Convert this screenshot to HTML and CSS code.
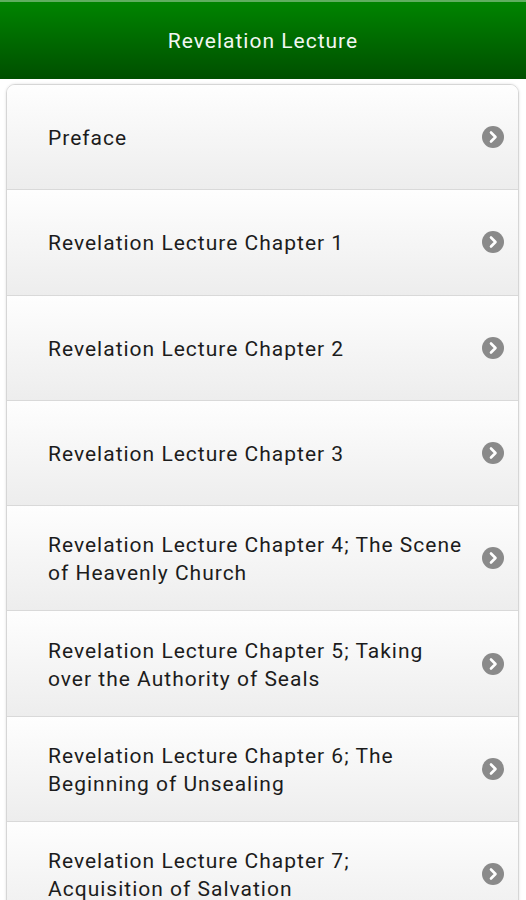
FILE: index.html
```html
<!DOCTYPE html>
<html>
<head>
<meta charset="utf-8">
<link rel="stylesheet" href="styles.css">
</head>
<body>
<header class="bar">Revelation Lecture</header>
<ul class="list">
  <li class="item"><span class="label">Preface</span><span class="arrow"><svg viewBox="0 0 22 22" width="22" height="22"><circle cx="11" cy="11" r="11" fill="#8a8a8a"/><path d="M9 6.5 L13.5 11 L9 15.5" fill="none" stroke="#fff" stroke-width="2.6" stroke-linecap="round" stroke-linejoin="round"/></svg></span></li>
  <li class="item"><span class="label">Revelation Lecture Chapter 1</span><span class="arrow"><svg viewBox="0 0 22 22" width="22" height="22"><circle cx="11" cy="11" r="11" fill="#8a8a8a"/><path d="M9 6.5 L13.5 11 L9 15.5" fill="none" stroke="#fff" stroke-width="2.6" stroke-linecap="round" stroke-linejoin="round"/></svg></span></li>
  <li class="item"><span class="label">Revelation Lecture Chapter 2</span><span class="arrow"><svg viewBox="0 0 22 22" width="22" height="22"><circle cx="11" cy="11" r="11" fill="#8a8a8a"/><path d="M9 6.5 L13.5 11 L9 15.5" fill="none" stroke="#fff" stroke-width="2.6" stroke-linecap="round" stroke-linejoin="round"/></svg></span></li>
  <li class="item"><span class="label">Revelation Lecture Chapter 3</span><span class="arrow"><svg viewBox="0 0 22 22" width="22" height="22"><circle cx="11" cy="11" r="11" fill="#8a8a8a"/><path d="M9 6.5 L13.5 11 L9 15.5" fill="none" stroke="#fff" stroke-width="2.6" stroke-linecap="round" stroke-linejoin="round"/></svg></span></li>
  <li class="item"><span class="label">Revelation Lecture Chapter 4; The Scene of Heavenly Church</span><span class="arrow"><svg viewBox="0 0 22 22" width="22" height="22"><circle cx="11" cy="11" r="11" fill="#8a8a8a"/><path d="M9 6.5 L13.5 11 L9 15.5" fill="none" stroke="#fff" stroke-width="2.6" stroke-linecap="round" stroke-linejoin="round"/></svg></span></li>
  <li class="item"><span class="label">Revelation Lecture Chapter 5; Taking over the Authority of Seals</span><span class="arrow"><svg viewBox="0 0 22 22" width="22" height="22"><circle cx="11" cy="11" r="11" fill="#8a8a8a"/><path d="M9 6.5 L13.5 11 L9 15.5" fill="none" stroke="#fff" stroke-width="2.6" stroke-linecap="round" stroke-linejoin="round"/></svg></span></li>
  <li class="item"><span class="label">Revelation Lecture Chapter 6; The Beginning of Unsealing</span><span class="arrow"><svg viewBox="0 0 22 22" width="22" height="22"><circle cx="11" cy="11" r="11" fill="#8a8a8a"/><path d="M9 6.5 L13.5 11 L9 15.5" fill="none" stroke="#fff" stroke-width="2.6" stroke-linecap="round" stroke-linejoin="round"/></svg></span></li>
  <li class="item"><span class="label">Revelation Lecture Chapter 7; Acquisition of Salvation</span><span class="arrow"><svg viewBox="0 0 22 22" width="22" height="22"><circle cx="11" cy="11" r="11" fill="#8a8a8a"/><path d="M9 6.5 L13.5 11 L9 15.5" fill="none" stroke="#fff" stroke-width="2.6" stroke-linecap="round" stroke-linejoin="round"/></svg></span></li>
</ul>
</body>
</html>
```
FILE: styles.css
```css
html, body {
  margin: 0;
  padding: 0;
  background: #ffffff;
  overflow: hidden;
  height: 900px;
}
body {
  font-family: Roboto, "Noto Sans", "Liberation Sans", sans-serif;
}
.bar {
  height: 79px;
  box-sizing: border-box;
  border-top: 2px solid #5fae5f;
  background: linear-gradient(#008400, #004f00);
  color: #f2f7f2;
  font-size: 21px;
  letter-spacing: 1px;
  display: flex;
  align-items: center;
  justify-content: center;
  padding-top: 1px;
}
.list {
  list-style: none;
  margin: 5px 7px 0 6px;
  padding: 0;
  border: 1px solid #d6d6d6;
  border-radius: 9px;
  overflow: hidden;
  box-shadow: 0 0 3px rgba(0,0,0,0.12);
}
.item {
  height: 104.3px;
  display: flex;
  align-items: center;
  padding: 0 14px 0 41px;
  background: linear-gradient(#fefefe, #ededed);
  border-top: 1px solid #d9d9d9;
  color: #1c1c1c;
  font-size: 21px;
  letter-spacing: 1px;
  line-height: 28px;
}
.item:first-child {
  border-top: none;
}
.label {
  flex: 1;
  padding: 2px 16px 0 0;
}
.arrow {
  width: 22px;
  height: 22px;
  display: flex;
}
```
